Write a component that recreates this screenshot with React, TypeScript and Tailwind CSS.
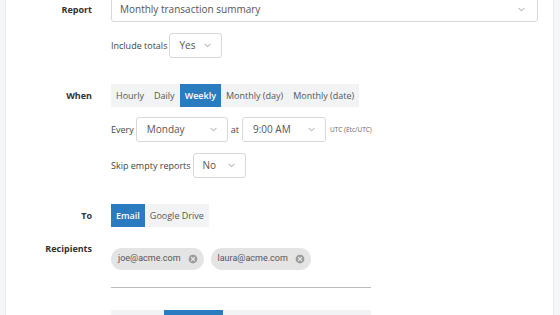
import { ChevronDown, CircleX } from 'lucide-react';

function Select({ value, className }: { value: string; className: string }) {
  return (
    <div className={`flex items-center justify-between border border-[#d5d8dc] rounded-[3px] bg-white h-[25px] text-[10px] text-[#555] ${className}`}>
      <span>{value}</span>
      <ChevronDown className="w-[11px] h-[11px] text-[#777]" strokeWidth={1.5} />
    </div>
  );
}

function Segmented({ items, active }: { items: string[]; active: string }) {
  return (
    <div className="flex w-fit bg-[#f1f3f5] h-[23px] text-[9px]">
      {items.map((item) => (
        <div
          key={item}
          className={`flex items-center px-[5px] ${item === active ? 'bg-[#2a7bc0] text-white font-semibold' : 'text-[#555]'}`}
        >
          {item}
        </div>
      ))}
    </div>
  );
}

function Chip({ label }: { label: string }) {
  return (
    <div className="flex items-center gap-[6px] bg-[#e4e4e4] rounded-full h-[22px] pl-[7px] pr-[5px] text-[9px] text-[#555] font-['Roboto',sans-serif]">
      <span>{label}</span>
      <CircleX className="w-[12px] h-[12px] text-[#e4e4e4] fill-[#9a9a9a]" strokeWidth={2.5} />
    </div>
  );
}

function Label({ text, className = '' }: { text: string; className?: string }) {
  return (
    <div className={`w-[86px] shrink-0 text-right text-[9px] font-bold text-[#333] ${className}`}>{text}</div>
  );
}

export default function App() {
  return (
    <div className="w-[560px] h-[315px] overflow-hidden flex bg-white font-['Open_Sans',sans-serif]">
      <div className="w-[6px] shrink-0 bg-[#f4f6f8] border-r border-[#e8ebee]" />
      <div className="flex-1 -mt-[3px]">
        <div className="flex">
          <Label text="Report" className="pt-[6px]" />
          <div className="ml-[19px] flex-1 pr-[15px]">
            <Select value="Monthly transaction summary" className="h-[24px] pl-[8px] pr-[10px] border-[#cfd3d8]" />
            <div className="flex items-center mt-[11px] text-[9px] text-[#444]">
              <span className="mr-[2px]">Include totals</span>
              <Select value="Yes" className="w-[53px] pl-[9px] pr-[8px]" />
            </div>
          </div>
        </div>

        <div className="flex mt-[26px]">
          <Label text="When" className="pt-[5px]" />
          <div className="ml-[19px] flex-1">
            <Segmented items={['Hourly', 'Daily', 'Weekly', 'Monthly (day)', 'Monthly (date)']} active="Weekly" />
            <div className="flex items-center mt-[10px] text-[9px] text-[#444]">
              <span className="mr-[2px]">Every</span>
              <Select value="Monday" className="w-[92px] pl-[10px] pr-[8px]" />
              <span className="mx-[3px]">at</span>
              <Select value="9:00 AM" className="w-[84px] pl-[10px] pr-[8px]" />
              <span className="ml-[4px] text-[6.5px] text-[#666]">UTC (Etc/UTC)</span>
            </div>
            <div className="flex items-center mt-[11px] text-[9px] text-[#444]">
              <span className="mr-[2px]">Skip empty reports</span>
              <Select value="No" className="w-[53px] pl-[9px] pr-[8px]" />
            </div>
          </div>
        </div>

        <div className="flex mt-[26px]">
          <Label text="To" className="pt-[5px]" />
          <div className="ml-[19px] flex-1">
            <Segmented items={['Email', 'Google Drive']} active="Email" />
          </div>
        </div>

        <div className="flex mt-[15px]">
          <Label text="Recipients" />
          <div className="ml-[19px] flex-1">
            <div className="flex gap-[7px] mt-[6px]">
              <Chip label="joe@acme.com" />
              <Chip label="laura@acme.com" />
            </div>
            <div className="w-[260px] border-b border-[#bbb] mt-[17px]" />
            <div className="flex w-[260px] h-[23px] bg-[#f1f3f5] mt-[22px]">
              <div className="w-[53px]" />
              <div className="w-[59px] bg-[#2a7bc0]" />
            </div>
          </div>
        </div>
      </div>
      <div className="w-[7px] shrink-0 bg-[#f4f6f8] border-l border-[#e8ebee]" />
    </div>
  );
}
